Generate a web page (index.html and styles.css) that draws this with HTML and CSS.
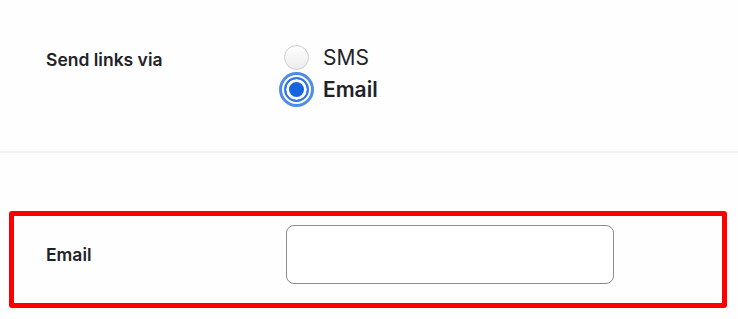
FILE: index.html
```html
<!DOCTYPE html>
<html lang="en">
<head>
    <meta charset="UTF-8">
    <meta name="viewport" content="width=device-width, initial-scale=1.0">
    <title>Send links</title>
    <link rel="stylesheet" href="styles.css">
</head>
<body>
    <div class="form-row first-row">
        <div class="row-label">Send links via</div>
        <div class="radio-group">
            <label class="radio-option">
                <input type="radio" name="via" class="radio-input" value="sms">
                <span>SMS</span>
            </label>
            <label class="radio-option selected">
                <input type="radio" name="via" class="radio-input" value="email" checked>
                <span>Email</span>
            </label>
        </div>
    </div>

    <hr class="divider">

    <div class="highlight">
        <div class="form-row email-row">
            <label class="row-label" for="email">Email</label>
            <input type="email" id="email" class="text-input">
        </div>
    </div>
</body>
</html>
```

FILE: styles.css
```css
body {
    margin: 0;
    background-color: #fefefe;
    font-family: Inter, "Noto Sans", sans-serif;
    color: #1f2328;
}

.form-row {
    display: grid;
    grid-template-columns: 238px 1fr;
    padding-left: 46px;
}

.first-row {
    padding-top: 41px;
    padding-bottom: 46px;
}

.row-label {
    font-size: 17.5px;
    font-weight: 600;
    line-height: 20px;
}

.first-row .row-label {
    padding-top: 9px;
}

.radio-group {
    display: flex;
    flex-direction: column;
}

.radio-option {
    display: flex;
    align-items: center;
    height: 32px;
    font-size: 21px;
    gap: 14px;
}

.radio-option.selected {
    font-weight: 600;
}

.radio-input {
    appearance: none;
    margin: 0;
    width: 25px;
    height: 25px;
    border-radius: 50%;
    border: 1px solid #cfcfcf;
    background: linear-gradient(#ffffff, #ececec);
    box-sizing: border-box;
}

.radio-input:checked {
    border: 2px solid #2f77e6;
    background: #1565df;
    box-shadow: inset 0 0 0 3px #fff, 0 0 0 2px #fff, 0 0 0 5px #4d8ce9;
}

.divider {
    margin: 0;
    border: none;
    height: 2px;
    background: #f2f2f2;
}

.highlight {
    margin: 58px 11px 0 9px;
    border: 5px solid #ff0000;
    border-radius: 3px;
}

.email-row {
    padding: 9px 0 19px 32px;
    grid-template-columns: 240px 1fr;
    align-items: center;
}

.text-input {
    width: 328px;
    height: 59px;
    box-sizing: border-box;
    border: 1px solid #8c8c8c;
    border-radius: 8px;
    background: #fff;
    font-family: inherit;
    font-size: 16px;
    padding: 0 12px;
}
```
